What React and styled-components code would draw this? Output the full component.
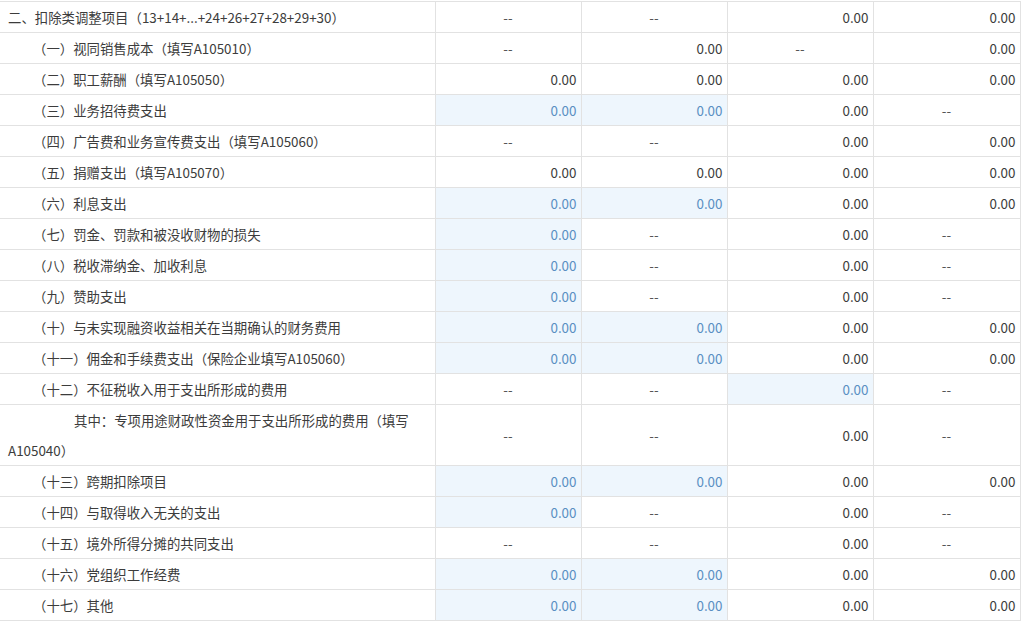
import React from "react";
import styled, { createGlobalStyle } from "styled-components";

const GlobalStyle = createGlobalStyle`
  body {
    margin: 0;
    background: #fff;
    font-family: "Noto Sans CJK SC", "Noto Sans", sans-serif;
  }
`;

const rows = [
  { label: "二、扣除类调整项目（13+14+...+24+26+27+28+29+30）", level: 0, cells: ["d", "d", "n", "n"] },
  { label: "（一）视同销售成本（填写A105010）", level: 1, cells: ["d", "n", "d", "n"] },
  { label: "（二）职工薪酬（填写A105050）", level: 1, cells: ["n", "n", "n", "n"] },
  { label: "（三）业务招待费支出", level: 1, cells: ["e", "e", "n", "d"] },
  { label: "（四）广告费和业务宣传费支出（填写A105060）", level: 1, cells: ["d", "d", "n", "n"] },
  { label: "（五）捐赠支出（填写A105070）", level: 1, cells: ["n", "n", "n", "n"] },
  { label: "（六）利息支出", level: 1, cells: ["e", "e", "n", "n"] },
  { label: "（七）罚金、罚款和被没收财物的损失", level: 1, cells: ["e", "d", "n", "d"] },
  { label: "（八）税收滞纳金、加收利息", level: 1, cells: ["e", "d", "n", "d"] },
  { label: "（九）赞助支出", level: 1, cells: ["e", "d", "n", "d"] },
  { label: "（十）与未实现融资收益相关在当期确认的财务费用", level: 1, cells: ["e", "e", "n", "n"] },
  { label: "（十一）佣金和手续费支出（保险企业填写A105060）", level: 1, cells: ["e", "e", "n", "n"] },
  { label: "（十二）不征税收入用于支出所形成的费用", level: 1, cells: ["d", "d", "e", "d"] },
  { label: "其中：专项用途财政性资金用于支出所形成的费用（填写 A105040）", level: 2, cells: ["d", "d", "n", "d"] },
  { label: "（十三）跨期扣除项目", level: 1, cells: ["e", "e", "n", "n"] },
  { label: "（十四）与取得收入无关的支出", level: 1, cells: ["e", "d", "n", "d"] },
  { label: "（十五）境外所得分摊的共同支出", level: 1, cells: ["d", "d", "n", "d"] },
  { label: "（十六）党组织工作经费", level: 1, cells: ["e", "e", "n", "n"] },
  { label: "（十七）其他", level: 1, cells: ["e", "e", "n", "n"] },
];

const indents = [0, 25, 66];
const widths = [435, 146, 146, 146, 147];

const App = () => {
  return (
    <>
      <GlobalStyle />
      <Sheet>
        <colgroup>
          {widths.map((w, i) => (
            <Col key={i} $w={w} />
          ))}
        </colgroup>
        <tbody>
          {rows.map((row, i) => (
            <tr key={i}>
              <Label $indent={indents[row.level]}>{row.label}</Label>
              {row.cells.map((c, j) =>
                c === "d" ? (
                  <Dash key={j}>--</Dash>
                ) : (
                  <Amount key={j} $editable={c === "e"}>
                    0.00
                  </Amount>
                )
              )}
            </tr>
          ))}
        </tbody>
      </Sheet>
    </>
  );
};

export default App;

const Sheet = styled.table`
  border-collapse: collapse;
  table-layout: fixed;
  width: 1020px;
  margin-top: 1px;
  font-size: 13.4px;
  color: #3c3c3c;
  td {
    border: 1px solid #e2e2e2;
    height: 30px;
    line-height: 30px;
    padding: 0;
  }
  td:first-child {
    border-left: none;
  }
`;

const Col = styled.col`
  width: ${(p) => p.$w}px;
`;

const Label = styled.td`
  padding: 0 8px !important;
  text-indent: ${(p) => p.$indent}px;
  word-break: normal;
`;

const Dash = styled.td`
  text-align: center;
  color: #555;
`;

const Amount = styled.td`
  text-align: right;
  padding-right: 4px !important;
  background: ${(p) => (p.$editable ? "#eef6fd" : "#fff")};
  color: ${(p) => (p.$editable ? "#5a8fc2" : "#3c3c3c")};
`;
